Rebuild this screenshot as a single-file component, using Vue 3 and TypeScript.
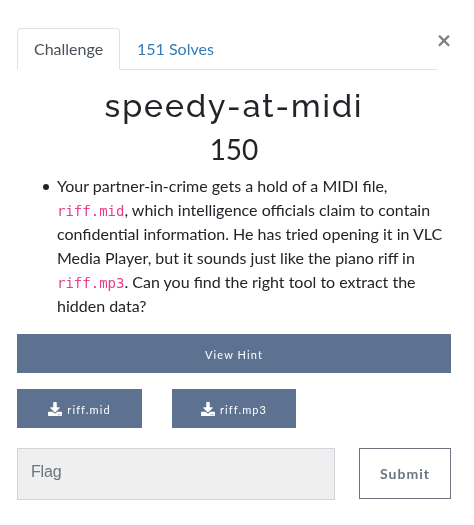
<script setup lang="ts">
interface ChallengeFile { name: string; width: number }

const title: string = 'speedy-at-midi'
const points: number = 150
const solves: number = 151
const files: ChallengeFile[] = [{ name: 'riff.mid', width: 125 }, { name: 'riff.mp3', width: 124 }]
</script>

<template>
  <main class="modal">
    <header class="top">
      <nav class="tabs">
        <a class="tab active">Challenge</a>
        <a class="tab">{{ solves }} Solves</a>
      </nav>
      <button class="close" aria-label="Close">×</button>
    </header>
    <h2 class="name">{{ title }}</h2>
    <h3 class="value">{{ points }}</h3>
    <ul class="desc">
      <li>
        Your partner-in-crime gets a hold of a MIDI file,<br>
        <code>riff.mid</code>, which intelligence officials claim to contain<br>
        confidential information. He has tried opening it in VLC<br>
        Media Player, but it sounds just like the piano riff in<br>
        <code>riff.mp3</code>. Can you find the right tool to extract the<br>
        hidden data?
      </li>
    </ul>
    <button class="hint">View Hint</button>
    <div class="files">
      <a v-for="file in files" :key="file.name" class="file" :style="{ width: file.width + 'px' }">
        <svg class="icon" viewBox="0 0 512 512" aria-hidden="true">
          <path fill="currentColor" d="M216 0h80c13.300 0 24 10.700 24 24v168h87.700c17.800 0 26.700 21.500 14.100 34.100L269.700 378.300c-7.500 7.500-19.800 7.500-27.300 0L90.100 226.100c-12.600-12.600-3.700-34.100 14.100-34.100H192V24c0-13.300 10.700-24 24-24zm296 376v112c0 13.300-10.700 24-24 24H24c-13.300 0-24-10.700-24-24V376c0-13.300 10.700-24 24-24h146.700l49 49c20.100 20.100 52.500 20.100 72.600 0l49-49H488c13.300 0 24 10.700 24 24zm-124 88c0-11-9-20-20-20s-20 9-20 20 9 20 20 20 20-9 20-20zm64 0c0-11-9-20-20-20s-20 9-20 20 9 20 20 20 20-9 20-20z" />
        </svg>
        <span>{{ file.name }}</span>
      </a>
    </div>
    <form class="submit-row" @submit.prevent>
      <input class="flag" type="text" placeholder="Flag">
      <button class="submit" type="submit">Submit</button>
    </form>
  </main>
</template>

<style>
body { background: #fff; }
</style>

<style scoped>
* { box-sizing: border-box; }
.modal { width: 474px; height: 525px; padding: 28px 23px 0 17px; overflow: hidden; color: #212529; font: 16px/24px Lato, sans-serif; will-change: transform; }
.top { display: flex; height: 42px; }
.tabs { display: flex; width: 420px; border-bottom: 1px solid #dee2e6; }
.tab { height: 42px; padding: 9px 17px; color: #337ab7; line-height: 24px; }
.tab.active { width: 103px; padding: 8px 16px; border: 1px solid #dee2e6; border-bottom-color: #fff; border-radius: 4px 4px 0 0; color: #495057; }
.close { display: flex; justify-content: center; width: 14px; height: 22px; margin: 0; padding: 0; border: 0; background: none; color: #7f7f7f; font: 700 25px/22px Lato, sans-serif; }
.name { margin: 17px 0 0; font: 500 32px/38px Raleway, Lato, sans-serif; letter-spacing: 2px; text-align: center; }
.value { margin: 7px 0 0; font: 400 28px/34px Lato, sans-serif; text-align: center; }
.desc { width: 434px; margin: 8px 0 0; padding-left: 40px; white-space: nowrap; list-style: none; }
.desc li { position: relative; }
.desc li::before { content: ""; position: absolute; top: 10px; left: -14px; width: 6px; height: 6px; border-radius: 50%; background: #212529; }
code { color: #e83e8c; font: 14px "DejaVu Sans Mono", monospace; }
.hint { display: block; width: 434px; height: 39px; margin-top: 16px; padding: 2px 0 0; border: 0; background: #5d7290; color: #fff; font: 11px/16px Lato, sans-serif; letter-spacing: 1.1px; }
.files { display: flex; gap: 30px; margin-top: 16px; }
.file { display: flex; align-items: center; justify-content: center; gap: 5px; height: 39px; background: #5d7290; color: #fff; font-size: 11px; letter-spacing: 1.1px; }
.file span { padding-top: 2px; }
.icon { width: 14px; height: 14px; }
.submit-row { display: flex; gap: 24px; width: 434px; margin-top: 20px; }
.flag { width: 318px; height: 52px; padding: 0 13px 5px; border: 1px solid #ced4da; border-radius: 0; background: #efefef; font: 16px "Liberation Sans", sans-serif; letter-spacing: -0.2px; }
.flag::placeholder { color: #6c757d; opacity: 1; }
.submit { width: 92px; height: 51px; padding: 0; border: 1px solid #6c757d; background: #fff; color: #6c757d; font: 700 14px Lato, sans-serif; letter-spacing: 1px; }
</style>
